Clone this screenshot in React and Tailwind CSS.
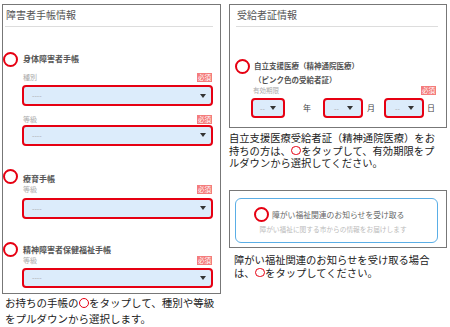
import React from 'react';

const Ring = ({ className }) => (
    <span className={`absolute w-[15px] h-[15px] rounded-full border-[2.5px] border-[#e60012] bg-white ${className}`} />
);

const Caret = () => (
    <svg width="6" height="4" viewBox="0 0 6 4" className="shrink-0">
        <polygon points="0,0 6,0 3,4" fill="#333" />
    </svg>
);

const Badge = () => (
    <span className="w-[15px] h-[9px] bg-[#f47c7c] text-white text-[6.5px] leading-[9px] text-center">必須</span>
);

const Select = ({ className, dash = '----' }) => (
    <div className={`flex items-center justify-between rounded-[4px] border-[2.5px] border-[#e60012] bg-[#dcecfb] ${className}`}>
        <span className="text-[7px] leading-none text-[#aaa]">{dash}</span>
        <Caret />
    </div>
);

const FieldRow = ({ label, className }) => (
    <div className={`flex items-center justify-between pl-[20px] pr-[8px] h-[9px] ${className}`}>
        <span className="text-[7px] leading-[9px] text-[#aaa]">{label}</span>
        <Badge />
    </div>
);

// red ring drawn inline in the captions
const Red = () => (
    <span className="inline-block w-[9.5px] h-[9.5px] mx-[0.5px] align-[-0.5px] rounded-full border-[1.5px] border-[#e60012]" />
);

const App = () => {
    return (
        <div className="w-[450px] h-[327px] bg-white flex items-start overflow-hidden font-['Noto_Sans_CJK_JP',sans-serif]">
            {/* left column */}
            <div className="ml-[2px] mt-[4px] w-[219px] flex flex-col">
                <div className="h-[290px] border border-[#777] flex flex-col">
                    <div className="pl-[3px] pt-[4px] text-[10px] leading-[12px] text-[#555]">障害者手帳情報</div>
                    <div className="mt-[5px] ml-[2px] mr-[7px] h-px bg-[#ddd]" />

                    <div className="relative mt-[27px] pl-[20px] text-[8px] leading-[10px] font-bold text-[#555]">
                        <Ring className="left-0 top-[-2.5px]" />
                        身体障害者手帳
                    </div>
                    <FieldRow label="種別" className="mt-[8.5px]" />
                    <Select className="mt-[3.5px] ml-[19px] mr-[7px] h-[21px] pl-[8px] pr-[5px]" />
                    <FieldRow label="等級" className="mt-[8.5px]" />
                    <Select className="mt-[1px] ml-[19px] mr-[7px] h-[21px] pl-[8px] pr-[5px]" />

                    <div className="relative mt-[28px] pl-[20px] text-[8px] leading-[10px] font-bold text-[#555]">
                        <Ring className="left-0 top-[-4.5px]" />
                        療育手帳
                    </div>
                    <FieldRow label="等級" className="mt-[1.5px]" />
                    <Select className="mt-[3.5px] ml-[19px] mr-[7px] h-[21px] pl-[8px] pr-[5px]" />

                    <div className="relative mt-[26px] pl-[20px] text-[8px] leading-[10px] font-bold text-[#555]">
                        <Ring className="left-0 top-[-2.5px]" />
                        精神障害者保健福祉手帳
                    </div>
                    <FieldRow label="等級" className="mt-[1.5px]" />
                    <Select className="mt-[2.5px] ml-[19px] mr-[7px] h-[20px] pl-[8px] pr-[5px]" />
                </div>
                <p className="mt-[1px] pl-[3px] text-[10.5px] leading-[16px] text-[#222] whitespace-nowrap">
                    お持ちの手帳の<Red />をタップして、種別や等級<br />
                    をプルダウンから選択します。
                </p>
            </div>

            {/* right column */}
            <div className="ml-[8px] mt-[4px] w-[218px] flex flex-col">
                <div className="h-[124px] border border-[#777] flex flex-col">
                    <div className="pl-[7px] pt-[4px] text-[10px] leading-[12px] text-[#555]">受給者証情報</div>
                    <div className="mt-[5px] ml-[6px] mr-[8px] h-px bg-[#ddd]" />

                    <div className="relative mt-[32px] pl-[24px] text-[7.5px] leading-[14px] font-bold text-[#555] whitespace-nowrap">
                        <Ring className="left-[4.5px] top-[0px]" />
                        自立支援医療（精神通院医療）<br />
                        （ピンク色の受給者証）
                    </div>
                    <div className="-mt-[1px] flex items-center justify-between pl-[23px] pr-[10px] h-[8px]">
                        <span className="text-[6.5px] leading-[8px] text-[#aaa]">有効期限</span>
                        <Badge />
                    </div>
                    <div className="mt-[4px] pl-[21px] flex items-center text-[8px] leading-[10px] text-[#444]">
                        <Select dash="--" className="w-[34px] h-[20px] pl-[7px] pr-[7px]" />
                        <span className="ml-[18px]">年</span>
                        <Select dash="--" className="ml-[12px] w-[40px] h-[20px] pl-[9px] pr-[8px]" />
                        <span className="ml-[4px]">月</span>
                        <Select dash="--" className="ml-[9px] w-[40px] h-[20px] pl-[9px] pr-[8px]" />
                        <span className="ml-[3px]">日</span>
                    </div>
                </div>
                <p className="mt-[4px] text-[10.3px] leading-[12.5px] text-[#222] whitespace-nowrap">
                    自立支援医療受給者証（精神通院医療）をお<br />
                    持ちの方は、<Red />をタップして、有効期限をプ<br />
                    ルダウンから選択してください。
                </p>

                <div className="mt-[20.5px] h-[58px] border border-[#777]">
                    <div className="mt-[7px] ml-[5px] mr-[8px] h-[45px] border-[1.5px] border-[#5aaee6] rounded-[6px]">
                        <div className="relative mt-[10.5px] pl-[36px] text-[7.8px] leading-[10px] text-[#666] whitespace-nowrap">
                            <Ring className="left-[18px] top-[-3px]" />
                            障がい福祉関連のお知らせを受け取る
                        </div>
                        <div className="mt-[5.5px] pl-[23.5px] text-[6.7px] leading-[9px] text-[#bbb] whitespace-nowrap">
                            障がい福祉に関する市からの情報をお届けします
                        </div>
                    </div>
                </div>
                <p className="mt-[6px] pl-[5px] text-[10.3px] leading-[12.5px] text-[#222] whitespace-nowrap">
                    障がい福祉関連のお知らせを受け取る場合<br />
                    は、<Red />をタップしてください。
                </p>
            </div>
        </div>
    );
};

export default App;
